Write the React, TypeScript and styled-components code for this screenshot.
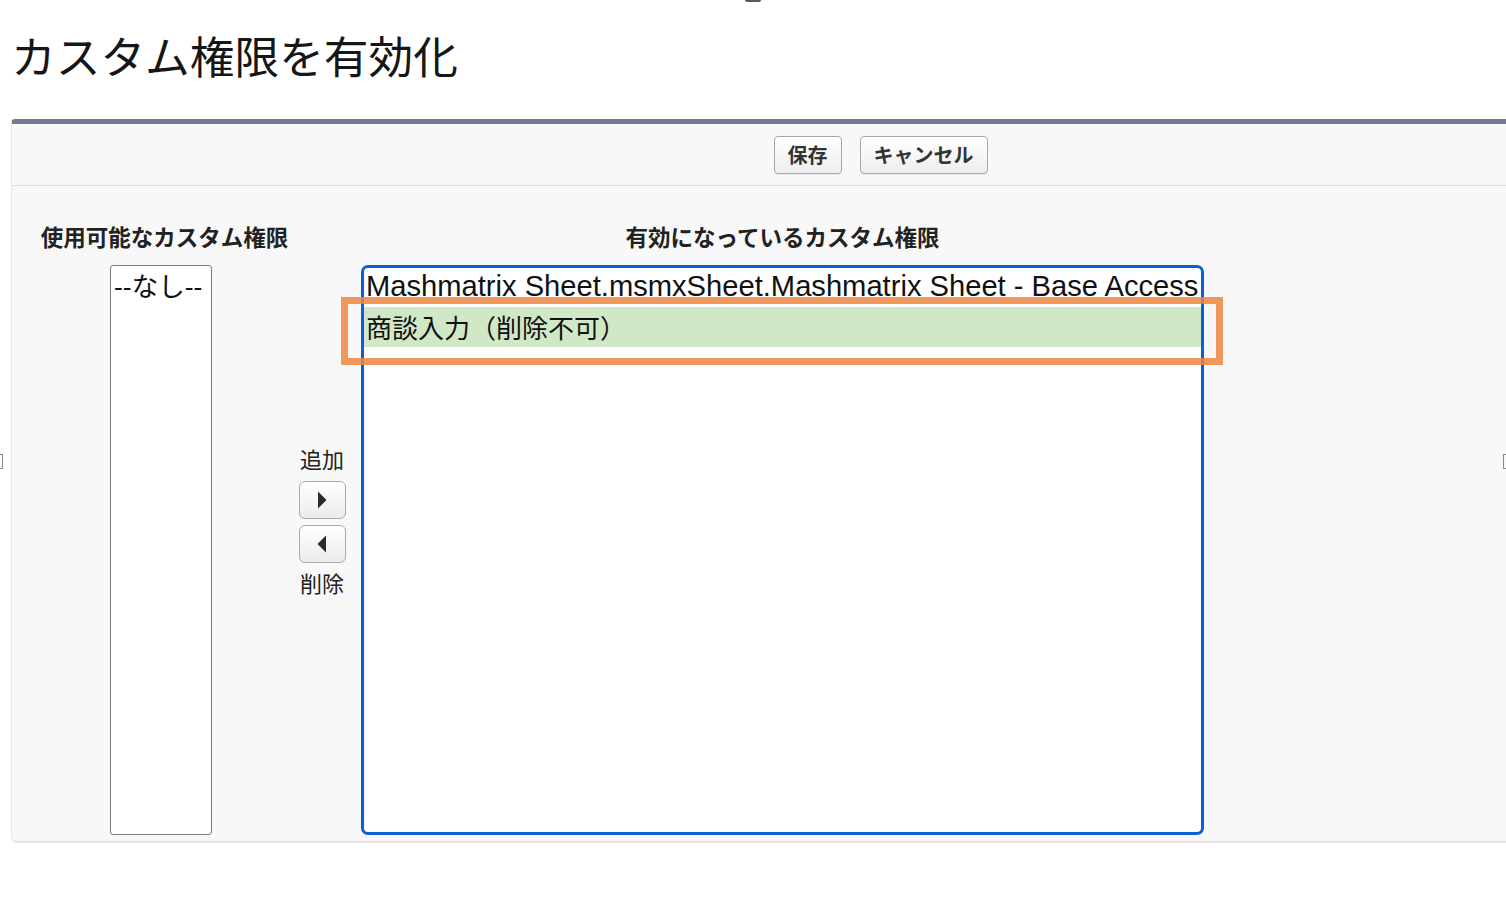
import React from "react";
import styled, { createGlobalStyle } from "styled-components";

const GlobalStyle = createGlobalStyle`
  html, body {
    margin: 0;
    padding: 0;
    background: #ffffff;
    overflow: hidden;
    font-family: "Liberation Sans", "Noto Sans CJK JP", sans-serif;
    color: #181818;
  }
`;

const Page = styled.div`
  position: relative;
  width: 1506px;
  height: 912px;
  overflow: hidden;
`;

const Title = styled.h1`
  margin: 0;
  padding: 29px 0 0 11px;
  height: 89px;
  box-sizing: border-box;
  font-family: "Noto Sans CJK JP", sans-serif;
  font-weight: 400;
  font-size: 44.7px;
  line-height: 52px;
  color: #161616;
`;

const Panel = styled.section`
  margin: 30px 0 0 11px;
  width: 1737px;
  background: #f8f8f8;
  border-top: 5px solid #737c93;
  border-left: 1px solid #e6e6e6;
  border-bottom: 2px solid #e3e3e3;
  border-radius: 4px 0 0 6px;
`;

const ButtonBar = styled.div`
  height: 61px;
  display: flex;
  align-items: center;
  justify-content: center;
  gap: 18px;
  border-bottom: 1px solid #dcdcdc;
`;

const Button = styled.button`
  height: 38px;
  padding: 0 13px;
  border: 1px solid #a8a8a8;
  border-radius: 4px;
  background: linear-gradient(#ffffff, #ededed);
  font-family: "Noto Sans CJK JP", sans-serif;
  font-weight: 700;
  font-size: 20px;
  line-height: 36px;
  color: #333;
  box-shadow: 0 1px 0 rgba(0, 0, 0, 0.06);
`;

const Body = styled.div`
  display: flex;
  align-items: flex-start;
  padding: 35px 0 6px 30px;
`;

const Column = styled.div<{ $width: number }>`
  width: ${({ $width }) => $width}px;
  display: flex;
  flex-direction: column;
  align-items: center;
`;

const ColumnLabel = styled.div`
  font-family: "Noto Sans CJK JP", sans-serif;
  font-weight: 700;
  font-size: 22.5px;
  line-height: 30px;
  color: #222;
  white-space: nowrap;
  margin-bottom: 14px;
`;

const ListWrap = styled.div`
  position: relative;
`;

const ListBox = styled.div<{ $width: number; $focused?: boolean; $shift?: number }>`
  width: ${({ $width }) => $width}px;
  height: 570px;
  box-sizing: border-box;
  margin-right: ${({ $shift }) => $shift ?? 0}px;
  background: #ffffff;
  border: ${({ $focused }) =>
    $focused ? "3px solid #0a5fd6" : "1.5px solid #7a7a7a"};
  border-radius: ${({ $focused }) => ($focused ? "7px" : "3px")};
  overflow: hidden;
`;

const Option = styled.div<{ $size: number; $selected?: boolean; $cjk?: boolean }>`
  height: ${({ $cjk }) => ($cjk ? 40 : 39)}px;
  padding-left: 2px;
  font-family: ${({ $cjk }) =>
    $cjk
      ? '"Noto Sans CJK JP", sans-serif'
      : '"Liberation Sans", "Noto Sans CJK JP", sans-serif'};
  font-size: ${({ $size }) => $size}px;
  line-height: ${({ $cjk }) => ($cjk ? 40 : 37)}px;
  color: #111;
  white-space: nowrap;
  background: ${({ $selected }) => ($selected ? "#d1e8c7" : "transparent")};
`;

const EmptyOption = styled.div`
  padding: 3px 0 0 3px;
  font-family: "Liberation Sans", "Noto Sans CJK JP", sans-serif;
  font-size: 26.5px;
  line-height: 36px;
  color: #111;
  white-space: nowrap;
`;

const Highlight = styled.div`
  position: absolute;
  left: -20px;
  top: 32px;
  width: 882px;
  height: 68px;
  box-sizing: border-box;
  border: 7px solid rgba(238, 134, 64, 0.85);
  pointer-events: none;
`;

const MoveColumn = styled.div`
  width: 74px;
  box-sizing: border-box;
  padding: 223px 4px 0 0;
  display: flex;
  flex-direction: column;
  align-items: center;
`;

const MoveLabel = styled.div<{ $gapTop?: number; $gapBottom?: number }>`
  font-family: "Noto Sans CJK JP", sans-serif;
  font-size: 22px;
  line-height: 28px;
  color: #222;
  margin-top: ${({ $gapTop }) => $gapTop ?? 0}px;
  margin-bottom: ${({ $gapBottom }) => $gapBottom ?? 0}px;
`;

const ArrowButton = styled.div`
  width: 47px;
  height: 38px;
  box-sizing: border-box;
  display: flex;
  align-items: center;
  justify-content: center;
  border: 1px solid #a9a9a9;
  border-radius: 6px;
  background: linear-gradient(#ffffff, #ececec);
  & + & {
    margin-top: 6px;
  }
`;

const EdgeMark = styled.span<{ $side: "left" | "right" | "top" }>`
  position: absolute;
  background: transparent;
  ${({ $side }) =>
    $side === "top"
      ? "top: 0; left: 745px; width: 16px; height: 2px; background: #5a5a5a; border-radius: 0 0 2px 2px;"
      : $side === "left"
      ? "left: 0; top: 454px; width: 2px; height: 13px; border: 1.5px solid #8a8a8a; border-left: none;"
      : "right: 0; top: 454px; width: 2px; height: 13px; border: 1.5px solid #8a8a8a; border-right: none;"}
`;

function Triangle({ dir }: { dir: "right" | "left" }) {
  return (
    <svg width="12" height="20" viewBox="0 0 12 20">
      {dir === "right" ? (
        <path d="M2 1.5 L10.5 10 L2 18.5 Z" fill="#2a2a2a" />
      ) : (
        <path d="M10 1.5 L1.5 10 L10 18.5 Z" fill="#2a2a2a" />
      )}
    </svg>
  );
}

export default function App() {
  return (
    <Page>
      <GlobalStyle />
      <EdgeMark $side="top" />
      <EdgeMark $side="left" />
      <EdgeMark $side="right" />
      <Title>カスタム権限を有効化</Title>
      <Panel>
        <ButtonBar>
          <Button>保存</Button>
          <Button>キャンセル</Button>
        </ButtonBar>
        <Body>
          <Column $width={245}>
            <ColumnLabel>使用可能なカスタム権限</ColumnLabel>
            <ListBox $width={102} $shift={7}>
              <EmptyOption>--なし--</EmptyOption>
            </ListBox>
          </Column>
          <MoveColumn>
            <MoveLabel $gapBottom={9}>追加</MoveLabel>
            <ArrowButton>
              <Triangle dir="right" />
            </ArrowButton>
            <ArrowButton>
              <Triangle dir="left" />
            </ArrowButton>
            <MoveLabel $gapTop={5}>削除</MoveLabel>
          </MoveColumn>
          <Column $width={843}>
            <ColumnLabel>有効になっているカスタム権限</ColumnLabel>
            <ListWrap>
              <ListBox $width={843} $focused>
                <Option $size={29.15}>
                  Mashmatrix Sheet.msmxSheet.Mashmatrix Sheet - Base Access
                </Option>
                <Option $size={26} $cjk $selected>
                  商談入力（削除不可）
                </Option>
              </ListBox>
              <Highlight />
            </ListWrap>
          </Column>
        </Body>
      </Panel>
    </Page>
  );
}
